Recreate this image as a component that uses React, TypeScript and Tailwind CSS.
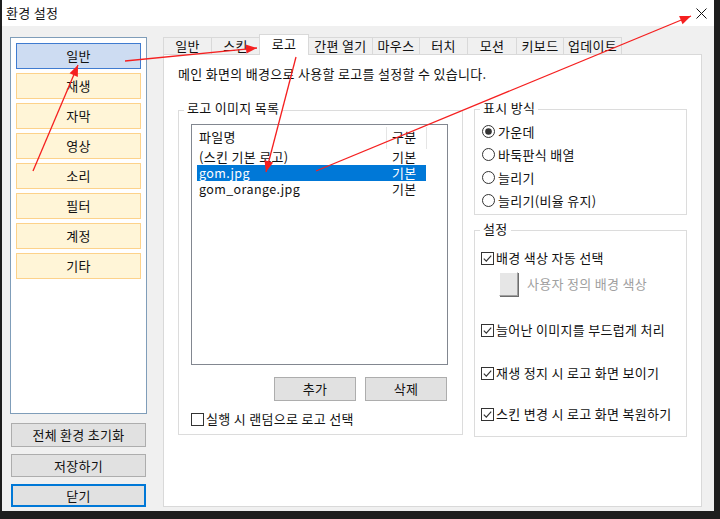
import React from 'react';

const menus = ['일반', '재생', '자막', '영상', '소리', '필터', '계정', '기타'];

const tabs = [
  { label: '일반', w: 'w-[48px]' },
  { label: '스킨', w: 'w-[48px]' },
  { label: '로고', w: 'w-[50px]', active: true },
  { label: '간편 열기', w: 'w-[63px]', noLeft: true },
  { label: '마우스', w: 'w-[47px]' },
  { label: '터치', w: 'w-[48px]' },
  { label: '모션', w: 'w-[49px]' },
  { label: '키보드', w: 'w-[47px]' },
  { label: '업데이트', w: 'w-[59px]', last: true },
];

const files = [
  { name: '(스킨 기본 로고)', kind: '기본' },
  { name: 'gom.jpg', kind: '기본', selected: true },
  { name: 'gom_orange.jpg', kind: '기본' },
];

const modes = ['가운데', '바둑판식 배열', '늘리기', '늘리기(비율 유지)'];

function CheckBox({ checked }: { checked?: boolean }) {
  return (
    <svg width="13" height="13" viewBox="0 0 13 13" className="shrink-0">
      <rect x="0.5" y="0.5" width="12" height="12" fill="#fff" stroke="#333" />
      {checked && <path d="M2.8 6.6 L5.3 9.1 L10.2 3.6" fill="none" stroke="#333" strokeWidth="1.2" />}
    </svg>
  );
}

function Radio({ checked }: { checked?: boolean }) {
  return (
    <svg width="13" height="13" viewBox="0 0 13 13" className="shrink-0">
      <circle cx="6.5" cy="6.5" r="6" fill="#fff" stroke="#333" />
      {checked && <circle cx="6.5" cy="6.5" r="3.3" fill="#333" />}
    </svg>
  );
}

// arrow head polygon from line end points
function head(x1: number, y1: number, x2: number, y2: number, len = 11, w = 4.5) {
  const dx = x2 - x1;
  const dy = y2 - y1;
  const d = Math.hypot(dx, dy);
  const ux = dx / d;
  const uy = dy / d;
  const bx = x2 - ux * len;
  const by = y2 - uy * len;
  return `${x2},${y2} ${bx - uy * w},${by + ux * w} ${bx + uy * w},${by - ux * w}`;
}

const arrows = [
  [125, 61, 257, 48],
  [33, 171, 78, 65],
  [296, 57, 266, 172],
  [316, 171, 691, 16],
];

export default function App() {
  return (
    <div className="relative w-[720px] h-[519px] bg-[#1e1e1e] pl-[2px] font-['Noto_Sans_CJK_KR',sans-serif] text-[13px] tracking-[0.3px] leading-[16px] text-[#111]">
      <div className="w-[712px] h-[511px] bg-[#f0f0f0] flex flex-col">
        {/* title bar */}
        <div className="h-[26px] bg-white flex items-center justify-between pl-[4px] pr-[7px]">
          <span>환경 설정</span>
          <svg width="11" height="11" viewBox="0 0 11 11">
            <path d="M0.5 0.5 L10.5 10.5 M10.5 0.5 L0.5 10.5" stroke="#111" strokeWidth="1" />
          </svg>
        </div>

        <div className="flex pl-[8px] pt-[8px]">
          {/* sidebar */}
          <div className="mt-[3px] w-[137px] flex flex-col">
            <div className="h-[377px] border border-[#7f9db9] bg-white px-[5px] pt-[5px] flex flex-col gap-[4px]">
              {menus.map((m, i) => (
                <div
                  key={m}
                  className={`h-[26px] flex items-center justify-center border ${
                    i === 0 ? 'bg-[#cddcf2] border-[#3f7bd0]' : 'bg-[#fff5d7] border-[#fdd28a]'
                  }`}
                >
                  {m}
                </div>
              ))}
            </div>
            <div className="mt-[9px] ml-px w-[135px] h-[24px] border border-[#adadad] bg-[#e1e1e1] flex items-center justify-center">
              전체 환경 초기화
            </div>
            <div className="mt-[7px] ml-px w-[135px] h-[23px] border border-[#adadad] bg-[#e1e1e1] flex items-center justify-center">
              저장하기
            </div>
            <div className="mt-[7px] ml-px w-[135px] h-[23px] border-2 border-[#0078d7] bg-[#e1e1e1] flex items-center justify-center">
              닫기
            </div>
          </div>

          {/* main */}
          <div className="ml-[16px] w-[539px] flex flex-col">
            <div className="h-[20px] flex items-end">
              {tabs.map(t =>
                t.active ? (
                  <div
                    key={t.label}
                    className={`${t.w} h-[21px] -mb-px relative z-10 bg-white border-t border-l border-r border-[#d9d9d9] flex justify-center pt-px`}
                  >
                    {t.label}
                  </div>
                ) : (
                  <div
                    key={t.label}
                    className={`${t.w} h-[17px] bg-[#f0f0f0] border-t border-[#d9d9d9] flex items-center justify-center ${
                      t.noLeft ? '' : 'border-l'
                    } ${t.last ? 'border-r' : ''}`}
                  >
                    {t.label}
                  </div>
                )
              )}
            </div>

            <div className="h-[453px] border border-[#d9d9d9] bg-white">
              <div className="pl-[14px] mt-[11px]">메인 화면의 배경으로 사용할 로고를 설정할 수 있습니다.</div>

              <div className="flex pl-[14px] gap-[11px] mt-[27px] items-start">
                {/* logo list group */}
                <div className="relative mt-px w-[285px] h-[325px] border border-[#dcdcdc]">
                  <span className="absolute left-[5px] -top-[11px] bg-white px-[3px]">로고 이미지 목록</span>
                  <div className="ml-[12px] mt-[13px] w-[257px] h-[241px] border border-[#828790] bg-white">
                    <div className="h-[24px] flex">
                      <div className="w-[194px] pl-[7px] flex items-center">파일명</div>
                      <div className="w-px h-[22px] mt-[2px] bg-[#e5e5e5]" />
                      <div className="w-[39px] pl-[5px] flex items-center">구분</div>
                      <div className="w-px h-[22px] mt-[2px] bg-[#e5e5e5]" />
                    </div>
                    {files.map((f, i) => (
                      <div
                        key={f.name}
                        className={`ml-[5px] w-[229px] h-[16px] flex ${f.selected ? 'bg-[#0078d7] text-white' : ''}`}
                      >
                        <span className={`w-[189px] pl-[2px] ${i > 0 ? 'text-[12.5px] tracking-[0.4px]' : ''}`}>{f.name}</span>
                        <span className="pl-[6px]">{f.kind}</span>
                      </div>
                    ))}
                  </div>
                  <div className="ml-[12px] mt-[12px] w-[257px] pr-px flex justify-end gap-[9px]">
                    <div className="w-[82px] h-[24px] border border-[#adadad] bg-[#e1e1e1] flex items-center justify-center">추가</div>
                    <div className="w-[82px] h-[24px] border border-[#adadad] bg-[#e1e1e1] flex items-center justify-center">삭제</div>
                  </div>
                  <div className="ml-[12px] mt-[10px] flex items-center gap-[2px]">
                    <CheckBox />
                    <span>실행 시 랜덤으로 로고 선택</span>
                  </div>
                </div>

                {/* right column */}
                <div className="w-[213px] flex flex-col">
                  <div className="relative h-[106px] border border-[#dcdcdc] pt-[10px]">
                    <span className="absolute left-[5px] -top-[10px] bg-white px-[3px]">표시 방식</span>
                    {modes.map((m, i) => (
                      <div key={m} className="h-[23px] pl-[7px] flex items-center gap-[3px]">
                        <Radio checked={i === 0} />
                        <span>{m}</span>
                      </div>
                    ))}
                  </div>

                  <div className="relative mt-[15px] h-[207px] border border-[#dcdcdc]">
                    <span className="absolute left-[5px] -top-[10px] bg-white px-[3px]">설정</span>
                    <div className="mt-[19px] pl-[6px] flex items-center gap-[2px]">
                      <CheckBox checked />
                      <span>배경 색상 자동 선택</span>
                    </div>
                    <div className="mt-[6px] pl-[24px] flex items-center gap-[9px]">
                      <div className="w-[19px] h-[24px] bg-[#e6e6e6] border border-t-white border-l-white border-r-[#a0a0a0] border-b-[#a0a0a0] shadow-[1px_1px_0_#6d6d6d]" />
                      <span className="text-[#a0a0a0]">사용자 정의 배경 색상</span>
                    </div>
                    <div className="mt-[26px] pl-[6px] flex items-center gap-[2px]">
                      <CheckBox checked />
                      <span>늘어난 이미지를 부드럽게 처리</span>
                    </div>
                    <div className="mt-[27px] pl-[6px] flex items-center gap-[2px]">
                      <CheckBox checked />
                      <span>재생 정지 시 로고 화면 보이기</span>
                    </div>
                    <div className="mt-[25px] pl-[6px] flex items-center gap-[2px]">
                      <CheckBox checked />
                      <span>스킨 변경 시 로고 화면 복원하기</span>
                    </div>
                  </div>
                </div>
              </div>
            </div>
          </div>
        </div>
      </div>

      {/* red annotation arrows */}
      <svg className="absolute left-0 top-0 pointer-events-none" width="720" height="519" viewBox="0 0 720 519">
        {arrows.map(([x1, y1, x2, y2], i) => (
          <g key={i}>
            <line x1={x1} y1={y1} x2={x2} y2={y2} stroke="#f52020" strokeWidth="1.3" />
            <polygon points={head(x1, y1, x2, y2)} fill="#f52020" />
          </g>
        ))}
      </svg>
    </div>
  );
}
